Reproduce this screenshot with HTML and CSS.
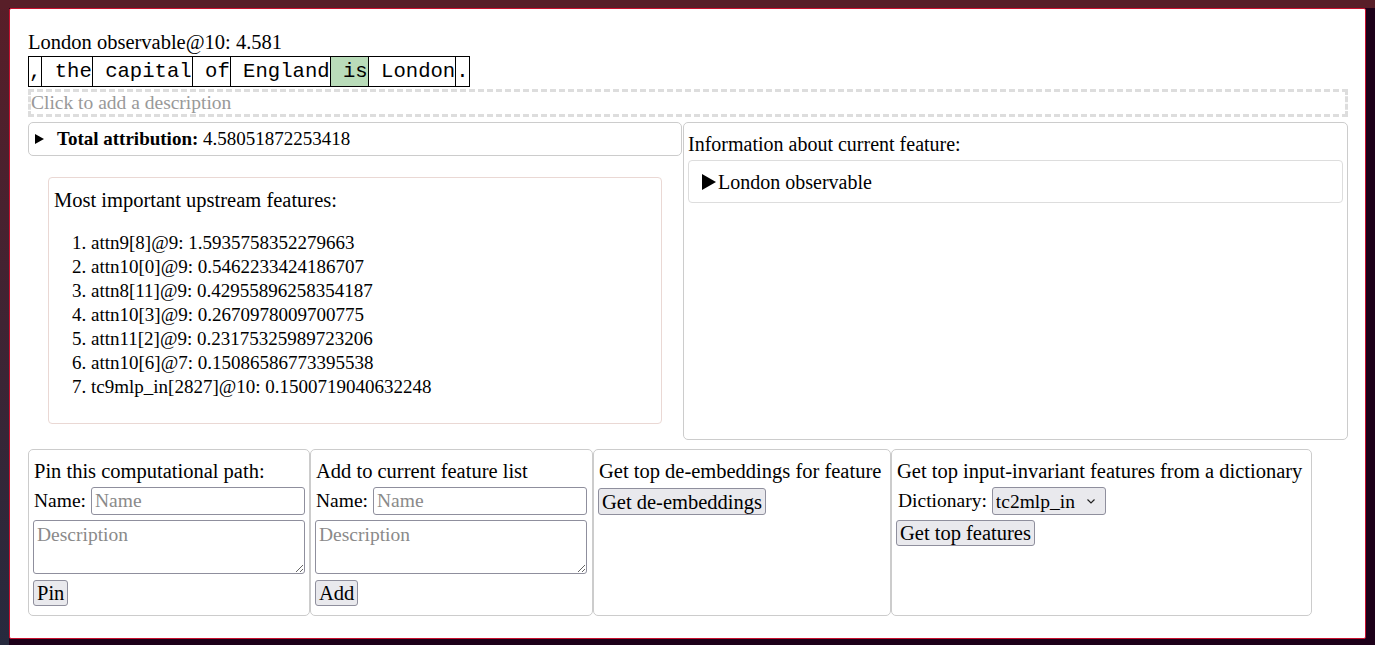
FILE: index.html
```html
<!DOCTYPE html>
<html lang="en">
<head>
<meta charset="utf-8">
<title>Feature attribution</title>
<link rel="stylesheet" href="styles.css">
</head>
<body>
<div class="panel">
  <div class="title">London observable@10: 4.581</div>
  <div class="tokens"><span class="tok">,</span><span class="tok"> the</span><span class="tok"> capital</span><span class="tok"> of</span><span class="tok"> England</span><span class="tok tok-hl"> is</span><span class="tok"> London</span><span class="tok">.</span></div>
  <div class="desc">Click to add a description</div>
  <div class="cols">
    <div class="left">
      <div class="attr">
        <svg class="tri-sm" width="9" height="10" viewBox="0 0 9 10"><polygon points="0,0 9,5 0,10" fill="#000"/></svg>
        <span><b>Total attribution:</b> 4.58051872253418</span>
      </div>
      <div class="upstream">
        <div class="up-head">Most important upstream features:</div>
        <ol class="up-list">
          <li>attn9[8]@9: 1.5935758352279663</li>
          <li>attn10[0]@9: 0.5462233424186707</li>
          <li>attn8[11]@9: 0.42955896258354187</li>
          <li>attn10[3]@9: 0.2670978009700775</li>
          <li>attn11[2]@9: 0.23175325989723206</li>
          <li>attn10[6]@7: 0.15086586773395538</li>
          <li>tc9mlp_in[2827]@10: 0.1500719040632248</li>
        </ol>
      </div>
    </div>
    <div class="info">
      <div class="info-head">Information about current feature:</div>
      <div class="feat">
        <svg class="tri-lg" width="14" height="16" viewBox="0 0 14 16"><polygon points="0,0 14,8 0,16" fill="#000"/></svg>
        <span>London observable</span>
      </div>
    </div>
  </div>
  <div class="actions">
    <div class="card c1">
      <div class="card-head">Pin this computational path:</div>
      <div class="row"><span class="lbl">Name:</span><input class="inp" type="text" placeholder="Name"></div>
      <textarea class="ta" placeholder="Description"></textarea>
      <button class="btn btn-after-ta">Pin</button>
    </div>
    <div class="card c2">
      <div class="card-head">Add to current feature list</div>
      <div class="row"><span class="lbl">Name:</span><input class="inp" type="text" placeholder="Name"></div>
      <textarea class="ta" placeholder="Description"></textarea>
      <button class="btn btn-after-ta">Add</button>
    </div>
    <div class="card c3">
      <div class="card-head">Get top de-embeddings for feature</div>
      <button class="btn btn-tall">Get de-embeddings</button>
    </div>
    <div class="card c4">
      <div class="card-head">Get top input-invariant features from a dictionary</div>
      <div class="row"><span class="lbl">Dictionary:</span>
        <span class="sel-wrap">
          <select class="sel"><option>tc2mlp_in</option></select>
          <svg class="chev" width="8" height="5" viewBox="0 0 8 5"><polyline points="0.5,0.5 4,4 7.5,0.5" fill="none" stroke="#222" stroke-width="1.2"/></svg>
        </span>
      </div>
      <button class="btn btn-after-row">Get top features</button>
    </div>
  </div>
</div>
</body>
</html>
```
FILE: styles.css
```css
html, body {
  margin: 0;
}
body {
  box-sizing: border-box;
  height: 645px;
  padding: 8px 9px 6px 9px;
  background:
    linear-gradient(#581e28, #581e28) top left / 100% 8px no-repeat,
    linear-gradient(to bottom, #581e28, #262a3e) top left / 9px 100% no-repeat,
    #1d0019;
  font-family: "Liberation Serif", "Times New Roman", serif;
  font-size: 20.5px;
  color: #000;
  overflow: hidden;
}
.panel {
  box-sizing: border-box;
  height: 631px;
  background: #fff;
  border: 1px solid #c8102e;
  border-radius: 2px;
  padding: 21px 17px 0 18px;
}
.title {
  line-height: 24px;
}
.tokens {
  display: flex;
  margin-top: 2px;
}
.tok {
  font-family: "Liberation Mono", "DejaVu Sans Mono", monospace;
  font-size: 20.6px;
  line-height: 29px;
  white-space: pre;
  border: 1px solid #000;
  margin-right: -1px;
}
.tok-hl {
  background: #b9dcb9;
}
.desc {
  box-sizing: border-box;
  margin-top: 2px;
  height: 28px;
  border: 3px dashed #ddd;
  font-size: 19.5px;
  line-height: 22px;
  color: #999;
}
.cols {
  display: grid;
  grid-template-columns: 654px 665px;
  column-gap: 1px;
  margin-top: 5px;
}
.attr {
  display: flex;
  align-items: center;
  border: 1px solid #ccc;
  border-radius: 5px;
  padding: 4px 6px;
  font-size: 19px;
  line-height: 24px;
}
.tri-sm {
  margin-right: 13px;
  flex: none;
}
.upstream {
  margin: 21px 20px 16px 20px;
  border: 1px solid #ead8d4;
  border-radius: 4px;
  padding: 10px 5px 5px 5px;
  line-height: 24px;
}
.up-list {
  margin: 19px 0 19px 0;
  padding-left: 37px;
  font-size: 19px;
}
.info {
  border: 1px solid #ccc;
  border-radius: 5px;
  padding: 4px;
  font-size: 20px;
}
.info-head {
  margin-top: 5px;
  line-height: 24px;
}
.feat {
  display: flex;
  align-items: center;
  margin-top: 4px;
  border: 1px solid #ddd;
  border-radius: 4px;
  padding: 9px 13px 8px 13px;
  line-height: 24px;
}
.tri-lg {
  margin-right: 2px;
  flex: none;
}
.actions {
  display: flex;
  margin-top: 9px;
}
.card {
  box-sizing: border-box;
  height: 167px;
  border: 1px solid #ccc;
  border-radius: 5px;
  padding: 5px 5px 9px 5px;
  display: flex;
  flex-direction: column;
  align-items: flex-start;
}
.c1 { width: 282px; }
.c2 { width: 283px; }
.c3 { width: 298px; }
.c4 { width: 421px; }
.card-head {
  line-height: 32px;
  height: 32px;
  white-space: nowrap;
}
.row {
  display: flex;
  align-items: center;
  height: 28px;
  font-size: 19.5px;
}
.c1 .row, .c2 .row {
  width: 272px;
  margin-left: -1px;
}
.lbl {
  margin-right: 5px;
  white-space: nowrap;
  margin-left: 1px;
}
.inp {
  flex: 1;
  min-width: 0;
  box-sizing: border-box;
  height: 28px;
  border: 1px solid #8f8f9d;
  border-radius: 3px;
  padding: 0 3px;
  font: inherit;
}
.inp::placeholder, .ta::placeholder {
  color: #8a8a8a;
}
.ta {
  box-sizing: border-box;
  width: 272px;
  height: 54px;
  margin: 5px 0 0 -1px;
  border: 1px solid #8f8f9d;
  border-radius: 3px;
  padding: 2px 3px;
  font: inherit;
  font-size: 19.5px;
  line-height: 24px;
}
.btn {
  box-sizing: border-box;
  font: inherit;
  color: #000;
  background: #e9e9ed;
  border: 1px solid #8f8f9d;
  border-radius: 3px;
  padding: 0 3px;
  height: 26px;
  line-height: 24px;
  margin-left: -1px;
}
.btn-after-ta {
  margin-top: 6px;
}
.btn-tall {
  margin-top: 1px;
  height: 27px;
}
.btn-after-row {
  margin-top: 5px;
}
.sel-wrap {
  position: relative;
  display: inline-block;
}
.sel {
  appearance: none;
  -webkit-appearance: none;
  box-sizing: border-box;
  width: 114px;
  height: 28px;
  font: inherit;
  color: #000;
  background: #e9e9ed;
  border: 1px solid #8f8f9d;
  border-radius: 3px;
  padding: 0 20px 0 3px;
  display: block;
}
.chev {
  position: absolute;
  right: 11px;
  top: 12px;
  pointer-events: none;
}
```
